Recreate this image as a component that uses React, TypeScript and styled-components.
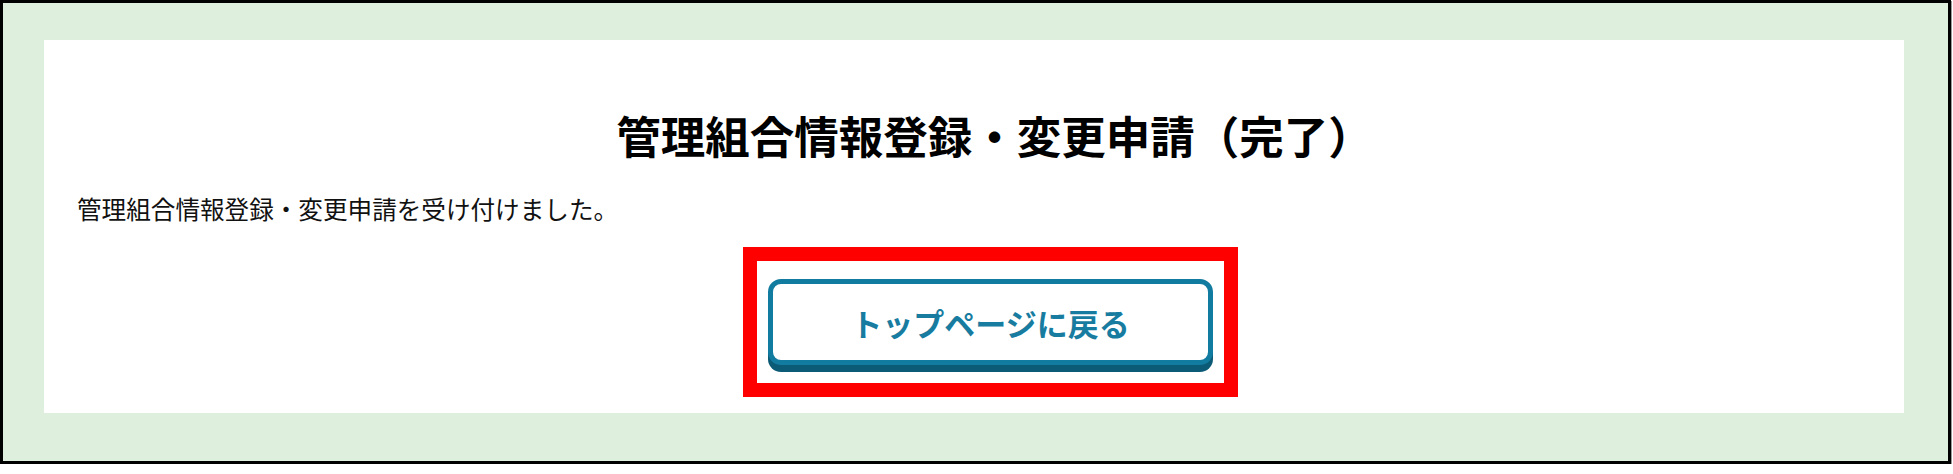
import React from 'react'
import styled, { createGlobalStyle } from 'styled-components'

const GlobalStyle = createGlobalStyle`
  html, body {
    margin: 0;
    padding: 0;
    background: #ffffff;
  }

  body {
    font-family: 'Noto Sans CJK JP', 'Noto Sans', sans-serif;
    color: #000000;
  }
`

export default function App(): JSX.Element {
  return (
    <>
      <GlobalStyle />
      <Frame>
        <Panel>
          <Title>管理組合情報登録・変更申請（完了）</Title>
          <Message>管理組合情報登録・変更申請を受け付けました。</Message>
          <Actions>
            <Highlight>
              <BackButton type="button">トップページに戻る</BackButton>
            </Highlight>
          </Actions>
        </Panel>
      </Frame>
    </>
  )
}

const Frame = styled.div`
  box-sizing: border-box;
  display: flex;
  width: 1951px;
  height: 464px;
  padding: 37px 44px 48px 41px;
  border: 3px solid #000000;
  background: #dfefde;
  box-shadow: 1px 1px 0 #9a9a9a;
`

const Panel = styled.div`
  box-sizing: border-box;
  display: flex;
  flex-direction: column;
  flex: 1;
  padding: 74px 0 0 33px;
  background: #ffffff;
`

const Title = styled.h1`
  margin: 0 0 0 8px;
  font-size: 44.5px;
  line-height: 42px;
  font-weight: 700;
  text-align: center;
  color: #000000;
`

const Message = styled.p`
  margin: 40px 0 0;
  font-size: 24.6px;
  line-height: 24px;
  font-weight: 400;
  color: #111111;
`

const Actions = styled.div`
  display: flex;
  justify-content: center;
  margin-top: 27px;
`

const Highlight = styled.div`
  display: flex;
  padding: 18px 11px;
  border: 14px solid #ff0000;
`

const BackButton = styled.button`
  box-sizing: border-box;
  width: 445px;
  height: 86px;
  padding: 0;
  border: 5px solid #127ba0;
  border-radius: 13px;
  background: #ffffff;
  box-shadow: 0 7px 0 #0b5a76;
  font-family: 'Noto Sans CJK JP', 'Noto Sans', sans-serif;
  font-size: 31px;
  line-height: 31px;
  font-weight: 600;
  color: #177c9f;
  cursor: pointer;
`
